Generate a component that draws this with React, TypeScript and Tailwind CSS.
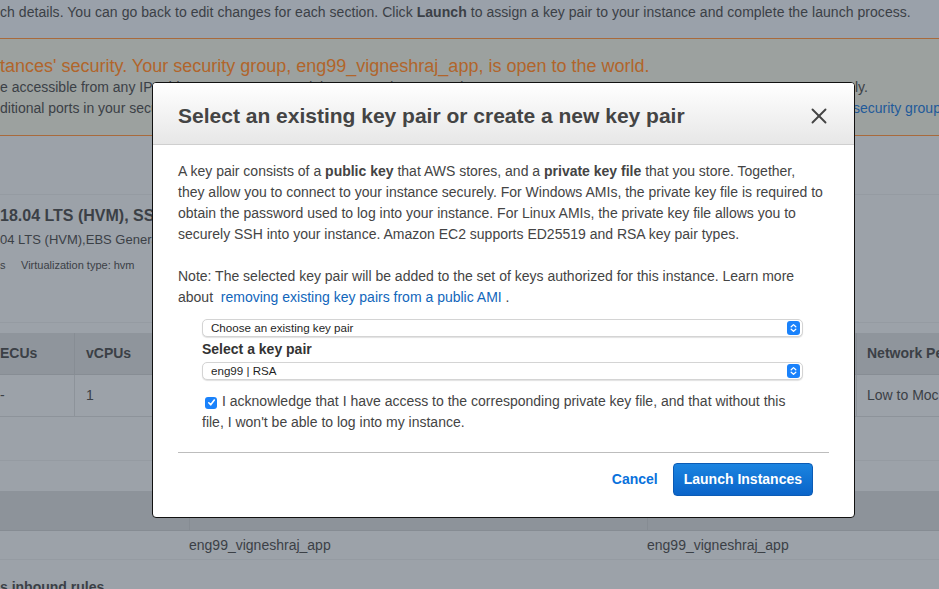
import { X } from "lucide-react";

const SelectBox = ({ label }: { label: string }) => (
  <div className="flex h-[18px] w-[601px] items-center justify-between rounded-[5px] border border-[#d4d4d4] bg-white pl-[8px] pr-[2px] shadow-[0_1px_1px_rgba(0,0,0,0.12)]">
    <span className="text-[11.6px] leading-none text-[#1f1f1f]">{label}</span>
    <span className="flex h-[14px] w-[13px] items-center justify-center rounded-[3px] bg-[#1a82fb]">
      <svg width="7" height="10" viewBox="0 0 7 10" fill="none" stroke="white" strokeWidth="1.3" strokeLinecap="round" strokeLinejoin="round">
        <path d="M1.2 3.8 L3.5 1.6 L5.8 3.8" />
        <path d="M1.2 6.2 L3.5 8.4 L5.8 6.2" />
      </svg>
    </span>
  </div>
);

export default function App() {
  return (
    <div className="relative h-[589px] w-[939px] overflow-hidden bg-[#9ca2a9] font-['Liberation_Sans',Arial,sans-serif] text-[14px] text-[#3b4046]">
      {/* page behind the dimmed overlay */}
      <div className="h-[38px] whitespace-nowrap bg-[#9aa1aa] pt-[3px] leading-[18px] tracking-[0.05px]">
        ch details. You can go back to edit changes for each section. Click <b>Launch</b> to assign a key pair to your instance and complete the launch process.
      </div>

      <div className="h-[98px] whitespace-nowrap border-y border-[#a86a3c] bg-[#9ca19f]">
        <div className="pt-[16px] text-[18px] leading-[22px] text-[#b1652b]">
          tances' security. Your security group, eng99_vigneshraj_app, is open to the world.
        </div>
        <div className="flex leading-[21px]">
          <span className="w-[855px] shrink-0 overflow-hidden">e accessible from any IP address. We recommend that you update your rules.</span>
          <span>ly.</span>
        </div>
        <div className="flex leading-[21px]">
          <span className="w-[853px] shrink-0 overflow-hidden">ditional ports in your security group as needed.</span>
          <span className="text-[#1f5a9a]">security group</span>
        </div>
      </div>

      <div className="h-[59px] border-b border-[#959ba2]" />

      <div className="h-[128px] whitespace-nowrap border-b border-[#959ba2]">
        <div className="pt-[10px] text-[16px] font-bold leading-[22px]">18.04 LTS (HVM), SSD Volume Type</div>
        <div className="pt-[4px] text-[13px] leading-[18px]">04 LTS (HVM),EBS General Purpose (SSD) Volume Type.</div>
        <div className="flex pt-[8px] text-[11px] leading-[16px]">
          <span className="w-[21px]">s</span>
          <span>Virtualization type: hvm</span>
        </div>
      </div>

      <div className="mt-[10px] grid grid-cols-[74px_782px_1fr] whitespace-nowrap">
        <div className="flex h-[42px] items-center border-b border-[#878d94] bg-[#8f959c] font-bold">ECUs</div>
        <div className="flex h-[42px] items-center border-b border-l border-[#878d94] bg-[#8f959c] pl-[11px] font-bold">vCPUs</div>
        <div className="flex h-[42px] items-center overflow-hidden border-b border-l border-[#878d94] bg-[#8f959c] pl-[10px] font-bold">Network Pe</div>
        <div className="flex h-[42px] items-center border-b border-[#8d939a]">-</div>
        <div className="flex h-[42px] items-center border-b border-l border-[#8d939a] pl-[11px]">1</div>
        <div className="flex h-[42px] items-center overflow-hidden border-b border-l border-[#8d939a] pl-[10px]">Low to Moc</div>
      </div>

      <div className="h-[44px] border-b border-[#959ba2]" />
      <div className="h-[30px]" />

      <div className="grid grid-cols-[189px_458px_1fr] whitespace-nowrap">
        <div className="h-[40px] border-b border-[#868c93] bg-[#8d939a]" />
        <div className="flex h-[40px] items-center border-b border-l border-[#868c93] bg-[#8d939a] font-bold">Security group ID</div>
        <div className="flex h-[40px] items-center border-b border-l border-[#868c93] bg-[#8d939a] pl-[40px] font-bold">Group name</div>
        <div className="h-[29px] border-b border-[#959ba2]" />
        <div className="flex h-[29px] items-center border-b border-[#959ba2] pt-[1px]">eng99_vigneshraj_app</div>
        <div className="flex h-[29px] items-center border-b border-[#959ba2] pt-[1px]">eng99_vigneshraj_app</div>
      </div>

      <div className="whitespace-nowrap pt-[18px] text-[14px] font-bold leading-[18px]">s inbound rules</div>

      {/* modal */}
      <div className="absolute left-[152px] top-[82px] h-[436px] w-[703px] overflow-hidden rounded-[4px] border border-[#111] bg-white text-[#444]">
        <div className="flex h-[62px] items-center justify-between border-b border-[#cfcfcf] bg-gradient-to-b from-white to-[#e7e7e7] pl-[25px] pr-[22px] pt-[4px]">
          <h2 className="text-[21px] font-bold text-[#444]">Select an existing key pair or create a new key pair</h2>
          <X size={26} strokeWidth={1.75} className="text-[#444]" />
        </div>

        <div className="px-[25px] pt-[16px] leading-[21px]">
          <p className="w-[645px]">
            A key pair consists of a <b>public key</b> that AWS stores, and a <b>private key file</b> that you store. Together, they allow you to connect to your instance securely. For Windows AMIs, the private key file is required to obtain the password used to log into your instance. For Linux AMIs, the private key file allows you to securely SSH into your instance. Amazon EC2 supports ED25519 and RSA key pair types.
          </p>
          <p className="mt-[21px] w-[645px]">
            Note: The selected key pair will be added to the set of keys authorized for this instance. Learn more about&nbsp; <span className="text-[#1166bb]">removing existing key pairs from a public AMI</span> .
          </p>

          <div className="px-[24px] pt-[11px]">
            <SelectBox label="Choose an existing key pair" />
            <div className="mb-[2px] pt-[2px] font-bold leading-[21px] text-[#333]">Select a key pair</div>
            <SelectBox label="eng99 | RSA" />
            <p className="pt-[11px]">
              <span className="mb-[-1px] ml-[3px] mr-[5px] inline-flex h-[12px] w-[12px] items-center justify-center rounded-[3px] bg-[#1a82fb] align-[-1px]">
                <svg width="9" height="9" viewBox="0 0 9 9" fill="none" stroke="white" strokeWidth="1.6" strokeLinecap="round" strokeLinejoin="round">
                  <path d="M1.8 4.8 L3.7 6.8 L7.3 2" />
                </svg>
              </span>
              I acknowledge that I have access to the corresponding private key file, and that without this file, I won't be able to log into my instance.
            </p>
          </div>

          <div className="mt-[19px] border-t border-[#bdbdbd]" />

          <div className="flex items-center justify-end gap-[15px] pr-[16px] pt-[10px]">
            <span className="font-bold text-[#0a72dc]">Cancel</span>
            <button className="h-[33px] rounded-[4px] border border-[#0b5bb5] bg-gradient-to-b from-[#1b84e0] to-[#0a64c9] px-[10px] font-bold text-white">
              Launch Instances
            </button>
          </div>
        </div>
      </div>
    </div>
  );
}
